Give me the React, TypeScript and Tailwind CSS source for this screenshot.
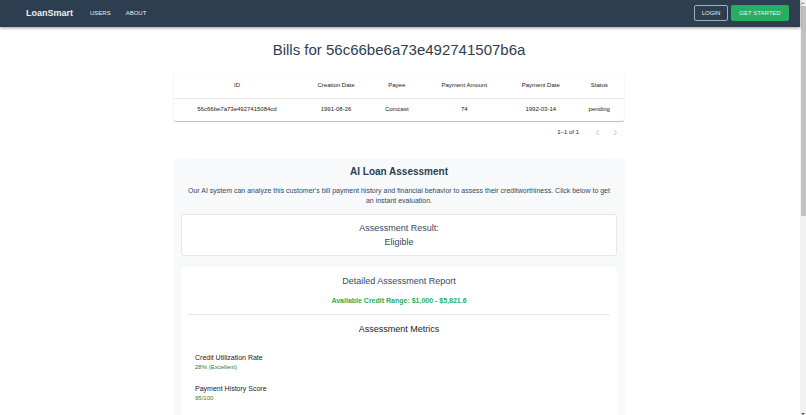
import { ChevronLeft, ChevronRight } from "lucide-react";

const columns = [
  { label: "ID", width: "w-[28%]" },
  { label: "Creation Date", width: "w-[16%]" },
  { label: "Payee", width: "w-[11%]" },
  { label: "Payment Amount", width: "w-[19%]" },
  { label: "Payment Date", width: "w-[15%]" },
  { label: "Status", width: "w-[11%]" },
];

const bills = [
  ["56c66be7a73e4927415084cd", "1991-08-26", "Comcast", "74", "1992-03-14", "pending"],
];

const metrics = [
  { label: "Credit Utilization Rate", value: "28% (Excellent)" },
  { label: "Payment History Score", value: "95/100" },
];

function NavBar() {
  return (
    <header className="relative flex h-[27px] shrink-0 items-center bg-[#2c3e50] pr-[11px] pb-px pl-[26px] text-white shadow-[0_1px_3px_rgba(0,0,0,0.4)]">
      <a href="#home" className="text-[9px] leading-3 font-bold text-[#ecf0f1]">
        LoanSmart
      </a>
      <nav className="ml-[17px] flex flex-1 gap-[15px] text-[6px] leading-3 text-[#ecf0f1]">
        <a href="#users">USERS</a>
        <a href="#about">ABOUT</a>
      </nav>
      <div className="flex gap-[3px] text-[6px] leading-3 text-[#ecf0f1]">
        <button type="button" className="h-4 w-[34px] rounded-xs border border-[#a3adb6]">
          LOGIN
        </button>
        <button type="button" className="h-4 w-[58px] rounded-xs bg-[#27ae60]">
          GET STARTED
        </button>
      </div>
    </header>
  );
}

function BillsTable() {
  return (
    <section>
      <div className="rounded-xs bg-white shadow-[0_1px_1px_rgba(0,0,0,0.25),0_0_2px_rgba(0,0,0,0.06)]">
        <table className="w-full table-fixed border-collapse text-center text-[6px] leading-[9px] text-[#212121]">
          <thead>
            <tr className="h-[25px] border-b border-[#e6e6e6]">
              {columns.map((c) => (
                <th key={c.label} scope="col" className={`${c.width} font-normal`}>
                  {c.label}
                </th>
              ))}
            </tr>
          </thead>
          <tbody>
            {bills.map((row) => (
              <tr key={row[0]} className="h-[23px]">
                {row.map((cell) => (
                  <td key={cell}>{cell}</td>
                ))}
              </tr>
            ))}
          </tbody>
        </table>
      </div>
      <div className="flex h-[23px] items-center justify-end text-[6px] text-[#212121]">
        <span>1–1 of 1</span>
        <button type="button" disabled aria-label="Previous page" className="ml-[9px] flex w-[18px] justify-center text-[#a8a8a8]">
          <ChevronLeft size={9} />
        </button>
        <button type="button" disabled aria-label="Next page" className="flex w-[18px] justify-center text-[#a8a8a8]">
          <ChevronRight size={9} />
        </button>
      </div>
    </section>
  );
}

function LoanAssessment() {
  return (
    <section className="mt-3.5 rounded-[5px] bg-[#f7f9fb] px-[7px] pt-[7px] pb-4 text-center shadow-[0_1px_3px_rgba(0,0,0,0.05)]">
      <h2 className="text-[10px] leading-[14px] font-bold text-[#2c3e50]">AI Loan Assessment</h2>
      <p className="mt-[7px] px-1 text-[7px] leading-[10px] text-[#34495e]">
        Our AI system can analyze this customer's bill payment history and financial behavior to assess their
        creditworthiness. Click below to get an instant evaluation.
      </p>
      <div className="mt-2 rounded-[3px] border border-[#e3e8ec] bg-white py-1.5 text-[9px] leading-[14px] text-[#34495e]">
        <h3>Assessment Result:</h3>
        <p>Eligible</p>
      </div>
      <div className="mt-[11px] rounded-[3px] bg-white px-[7px] pt-[7px] pb-16">
        <h3 className="text-[9px] leading-[14px] text-[#34495e]">Detailed Assessment Report</h3>
        <p className="mt-2 text-[7px] leading-[10px] font-bold text-[#27ae60]">
          Available Credit Range: $1,000 - $5,821.6
        </p>
        <hr className="mt-2 border-[#e6e6e6]" />
        <h4 className="mt-[7px] text-[9px] leading-[14px] text-[#212121]">Assessment Metrics</h4>
        <dl className="mt-[17px] flex flex-col gap-3 px-[7px] text-left">
          {metrics.map((m) => (
            <div key={m.label}>
              <dt className="text-[7px] leading-[10px] text-[#212121]">{m.label}</dt>
              <dd className="text-[6px] leading-[9px] text-[#2e7d32]">{m.value}</dd>
            </div>
          ))}
        </dl>
      </div>
    </section>
  );
}

function ScrollTrack() {
  return (
    <div aria-hidden="true" className="flex w-1.5 shrink-0 flex-col items-center bg-[#f1f1f1]">
      <div className="flex h-1.5 items-center">
        <span className="border-x-2 border-b-2 border-x-transparent border-b-[#a3a3a3]" />
      </div>
      <div className="w-[5px] flex-1">
        <div className="h-[52%] bg-[#c1c1c1]" />
      </div>
      <div className="flex h-1.5 items-end">
        <span className="border-x-2 border-t-2 border-x-transparent border-t-[#505050]" />
      </div>
    </div>
  );
}

export default function App() {
  return (
    <div className="flex h-screen overflow-hidden bg-white font-['Liberation_Sans',Arial,sans-serif]">
      <div className="flex min-w-0 flex-1 flex-col">
        <NavBar />
        <main className="min-h-0 flex-1 overflow-hidden pr-[18px] pl-4">
          <div className="mx-auto max-w-[450px]">
            <h1 className="pt-3.5 pb-3.5 text-center text-[15px] leading-[18px] text-[#2c3e50]">
              Bills for 56c66be6a73e492741507b6a
            </h1>
            <BillsTable />
            <LoanAssessment />
          </div>
        </main>
      </div>
      <ScrollTrack />
    </div>
  );
}
